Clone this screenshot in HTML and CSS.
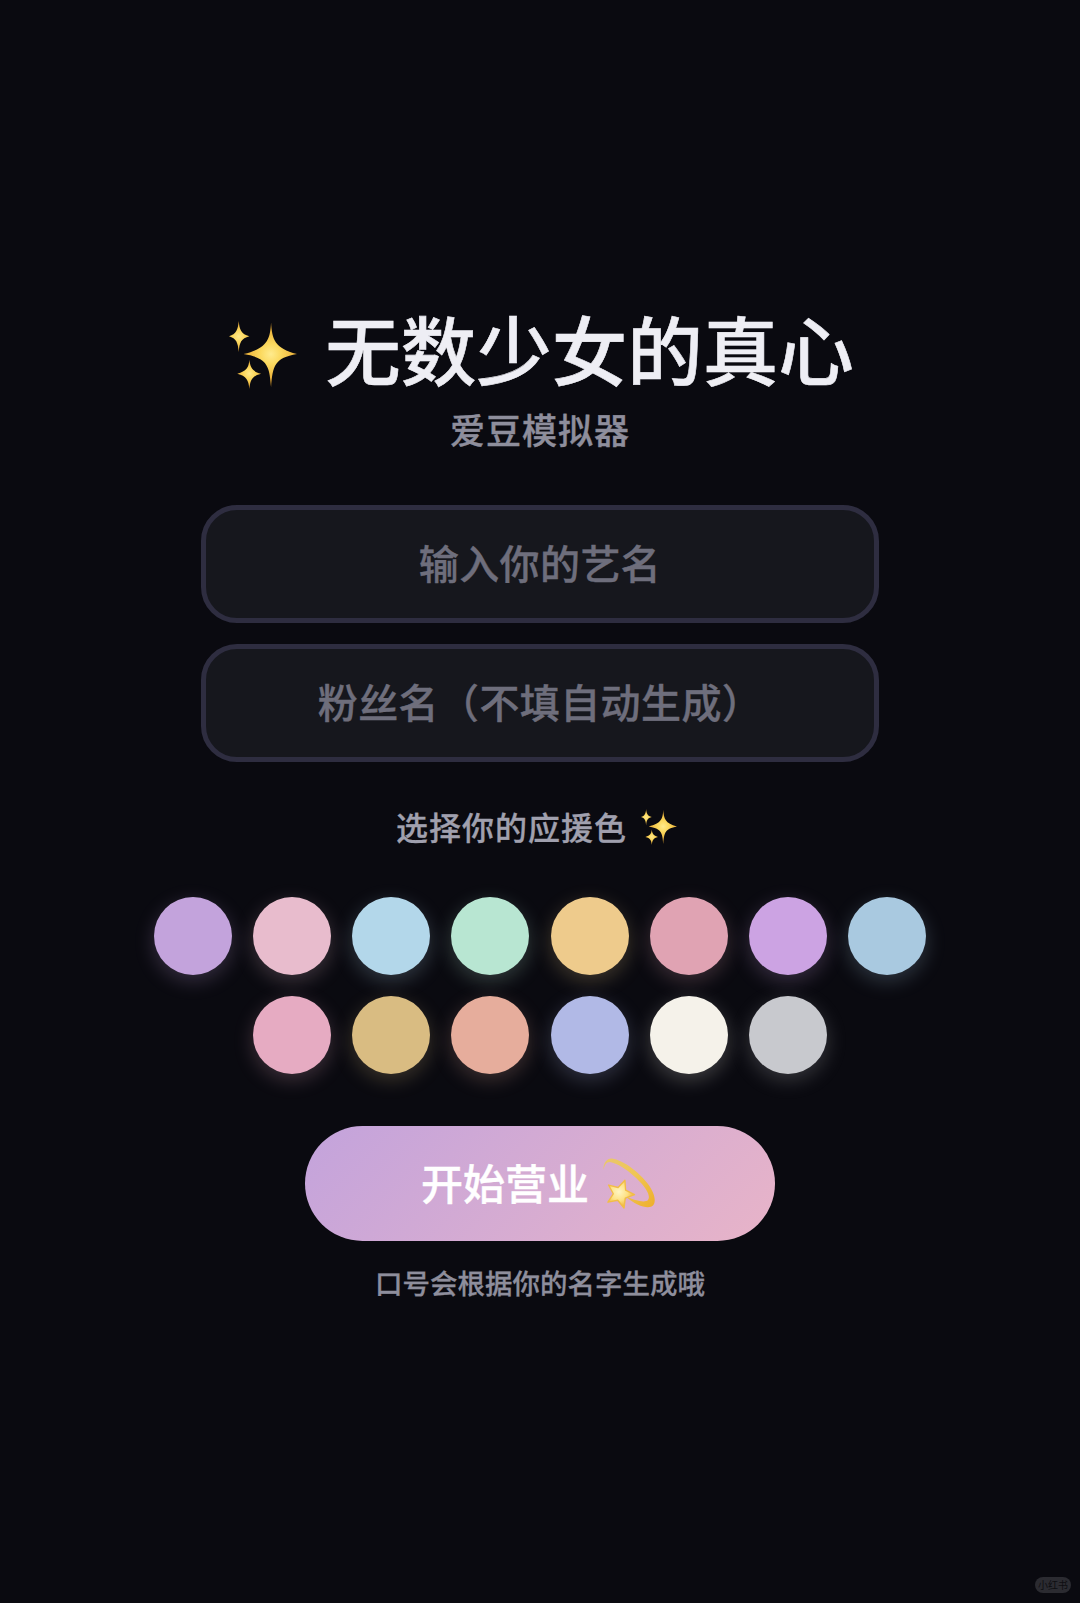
FILE: index.html
```html
<!DOCTYPE html>
<html lang="zh-CN">
<head>
<meta charset="utf-8">
<title>无数少女的真心</title>
<link rel="stylesheet" href="styles.css">
</head>
<body>
<svg class="defs" width="0" height="0" aria-hidden="true">
  <defs>
    <radialGradient id="gold" gradientUnits="userSpaceOnUse" cx="43" cy="34" r="30">
      <stop offset="0" stop-color="#ffeb8e"/>
      <stop offset="0.35" stop-color="#fbd95f"/>
      <stop offset="1" stop-color="#e8a62e"/>
    </radialGradient>
    <radialGradient id="gold1" gradientUnits="userSpaceOnUse" cx="10" cy="16" r="16">
      <stop offset="0" stop-color="#ffe98a"/>
      <stop offset="0.4" stop-color="#fbd65c"/>
      <stop offset="1" stop-color="#e5a22c"/>
    </radialGradient>
    <radialGradient id="gold2" gradientUnits="userSpaceOnUse" cx="21" cy="54" r="15">
      <stop offset="0" stop-color="#ffe98a"/>
      <stop offset="0.4" stop-color="#fbd65c"/>
      <stop offset="1" stop-color="#e5a22c"/>
    </radialGradient>
    <radialGradient id="star" gradientUnits="userSpaceOnUse" cx="15" cy="33" r="14">
      <stop offset="0" stop-color="#fff6c4"/>
      <stop offset="0.55" stop-color="#fde184"/>
      <stop offset="1" stop-color="#efb43a"/>
    </radialGradient>
    <linearGradient id="ring" gradientUnits="userSpaceOnUse" x1="0" y1="0" x2="50" y2="48">
      <stop offset="0" stop-color="#e9c76e"/>
      <stop offset="0.5" stop-color="#f0c654"/>
      <stop offset="1" stop-color="#eeb02e"/>
    </linearGradient>
    <symbol id="sparkles" viewBox="0 0 70 70">
      <path fill="url(#gold)" d="M43.3 1.5 C44.3 19 47 28 70 34 C47 38 45 46 43.3 68 C41.6 46 39.6 38 15 34 C39.6 28 42.3 19 43.3 1.5Z"/>
      <path fill="url(#gold1)" d="M10 0 C10.8 9 12.5 13.5 21 15.7 C12.5 18 10.8 22 10 32 C9.2 22 7.5 18 0 15.7 C7.5 13.5 9.2 9 10 0Z"/>
      <path fill="url(#gold2)" d="M21 40 C21.8 48 24 52 33 54.3 C24 56.5 21.8 61 21 70 C20.2 61 18 56.5 8.5 54.3 C18 52 20.2 48 21 40Z"/>
    </symbol>
  </defs>
</svg>
<main class="page">
  <h1 class="title">
    <svg class="sparkles-lg"><use href="#sparkles"/></svg>
    <span>无数少女的真心</span>
  </h1>
  <p class="subtitle">爱豆模拟器</p>
  <form class="fields">
    <input class="field" type="text" placeholder="输入你的艺名">
    <input class="field" type="text" placeholder="粉丝名（不填自动生成）">
  </form>
  <p class="label">
    <span class="label-text">选择你的应援色</span>
    <svg class="sparkles-sm"><use href="#sparkles"/></svg>
  </p>
  <div class="swatches">
    <i class="swatch c1"></i><i class="swatch c2"></i><i class="swatch c3"></i><i class="swatch c4"></i>
    <i class="swatch c5"></i><i class="swatch c6"></i><i class="swatch c7"></i><i class="swatch c8"></i>
    <i class="swatch c9"></i><i class="swatch c10"></i><i class="swatch c11"></i><i class="swatch c12"></i>
    <i class="swatch c13"></i><i class="swatch c14"></i>
  </div>
  <button class="start" type="button">
    <span class="start-text">开始营业</span>
    <svg class="dizzy" viewBox="0 0 52 52">
      <path fill="url(#ring)" d="M0.5 12 C0 5 4 0 9 0.5 C20 2 36 14 45 26 C51 34 53 42 51 46 C48 52 36 50 22 38 C33 43 42 45 45 42 C48 38 43 30 37 24 C27 13 14 5 7 4 C3.5 3.8 1.5 7 0.5 12Z"/>
      <path fill="url(#star)" stroke="#f2bd46" stroke-width="1.2" stroke-linejoin="round" transform="translate(17 36) scale(1.12) translate(-16 -35)" d="M20.4 22.8 L21 31.6 L29 35.5 L20.7 38.7 L19.6 47.5 L14 40.6 L5.2 42.3 L10 34.8 L5.8 27 L14.3 29.2Z"/>
    </svg>
  </button>
  <p class="hint">口号会根据你的名字生成哦</p>
</main>
<div class="watermark">小红书</div>
</body>
</html>
```

FILE: styles.css
```css
* { box-sizing: border-box; }

html, body {
  margin: 0;
  padding: 0;
  background: #0a0a10;
}

body {
  position: relative;
  width: 1080px;
  height: 1603px;
  overflow: hidden;
  font-family: "Noto Sans CJK SC", "Noto Sans", sans-serif;
}

.defs { position: absolute; }

.page {
  display: flex;
  flex-direction: column;
  align-items: center;
  padding-top: 301px;
}

.title {
  display: flex;
  align-items: center;
  gap: 27px;
  height: 92px;
  margin: 0 0 0 2px;
  font-size: 75.5px;
  line-height: 92px;
  font-weight: 500;
  -webkit-text-stroke: 0.6px #eeeef4;
  color: #eeeef4;
}

.sparkles-lg {
  width: 70px;
  height: 68px;
  margin-top: 16px;
}

.subtitle {
  height: 50px;
  margin: 11px 0 0;
  font-size: 35px;
  line-height: 50px;
  letter-spacing: 1px;
  font-weight: 500;
  -webkit-text-stroke: 0.4px #8e8e9c;
  color: #8e8e9c;
}

.fields {
  display: flex;
  flex-direction: column;
  gap: 21px;
  margin-top: 51px;
}

.field {
  display: block;
  width: 678px;
  height: 118px;
  padding: 0 24px 4px;
  border: 5.5px solid #2e2d40;
  border-radius: 36px;
  background: #16171d;
  font-family: inherit;
  font-size: 40px;
  letter-spacing: 0.4px;
  font-weight: 500;
  text-align: center;
  color: #eeeef4;
  outline: none;
}

.field::placeholder {
  color: #6e6e7c;
  -webkit-text-stroke: 0.4px #6e6e7c;
  opacity: 1;
}

.label {
  display: flex;
  align-items: center;
  gap: 14px;
  height: 46px;
  margin: 42px 7px 0 0;
  font-size: 32px;
  line-height: 46px;
  letter-spacing: 1px;
  font-weight: 500;
  -webkit-text-stroke: 0.3px #a0a0ae;
  color: #a0a0ae;
}

.label-text {
  padding-bottom: 3px;
}

.sparkles-sm {
  width: 36px;
  height: 36px;
}

.swatches {
  display: flex;
  flex-wrap: wrap;
  justify-content: center;
  gap: 21px 21.1px;
  width: 772px;
  margin-top: 47px;
}

.swatch {
  display: block;
  width: 78px;
  height: 78px;
  border-radius: 50%;
  background: var(--c);
  box-shadow: 0 6px 20px color-mix(in srgb, var(--c) 24%, transparent);
}

.c1 { --c: #c3a3dc; }
.c2 { --c: #e8bccd; }
.c3 { --c: #b3d7ea; }
.c4 { --c: #b8e6d2; }
.c5 { --c: #eecb8c; }
.c6 { --c: #e0a3b3; }
.c7 { --c: #cca3e3; }
.c8 { --c: #a9c9e0; }
.c9 { --c: #e6abc2; }
.c10 { --c: #d9bc82; }
.c11 { --c: #e6ad9c; }
.c12 { --c: #b1b9e6; }
.c13 { --c: #f5f2ea; }
.c14 { --c: #c8c9ce; }

.start {
  display: flex;
  align-items: center;
  justify-content: center;
  gap: 14px;
  width: 470px;
  height: 115px;
  margin-top: 52px;
  padding: 0 4px 0 0;
  border: 0;
  border-radius: 58px;
  background: linear-gradient(135deg, #c3a3dc, #e8b4c8);
  font-family: inherit;
  font-size: 42px;
  font-weight: 500;
  -webkit-text-stroke: 0.4px #ffffff;
  color: #ffffff;
}

.start-text {
  padding-bottom: 4px;
}

.dizzy {
  width: 52px;
  height: 52px;
}

.hint {
  height: 40px;
  margin: 21px 0 0;
  font-size: 27.5px;
  line-height: 40px;
  font-weight: 500;
  -webkit-text-stroke: 0.3px #8e8e9c;
  color: #8e8e9c;
}

.watermark {
  position: absolute;
  right: 9px;
  bottom: 10px;
  width: 36px;
  height: 16px;
  border-radius: 8px;
  background: #2b2b31;
  font-size: 10px;
  line-height: 16px;
  text-align: center;
  color: #0e0e12;
}
```
